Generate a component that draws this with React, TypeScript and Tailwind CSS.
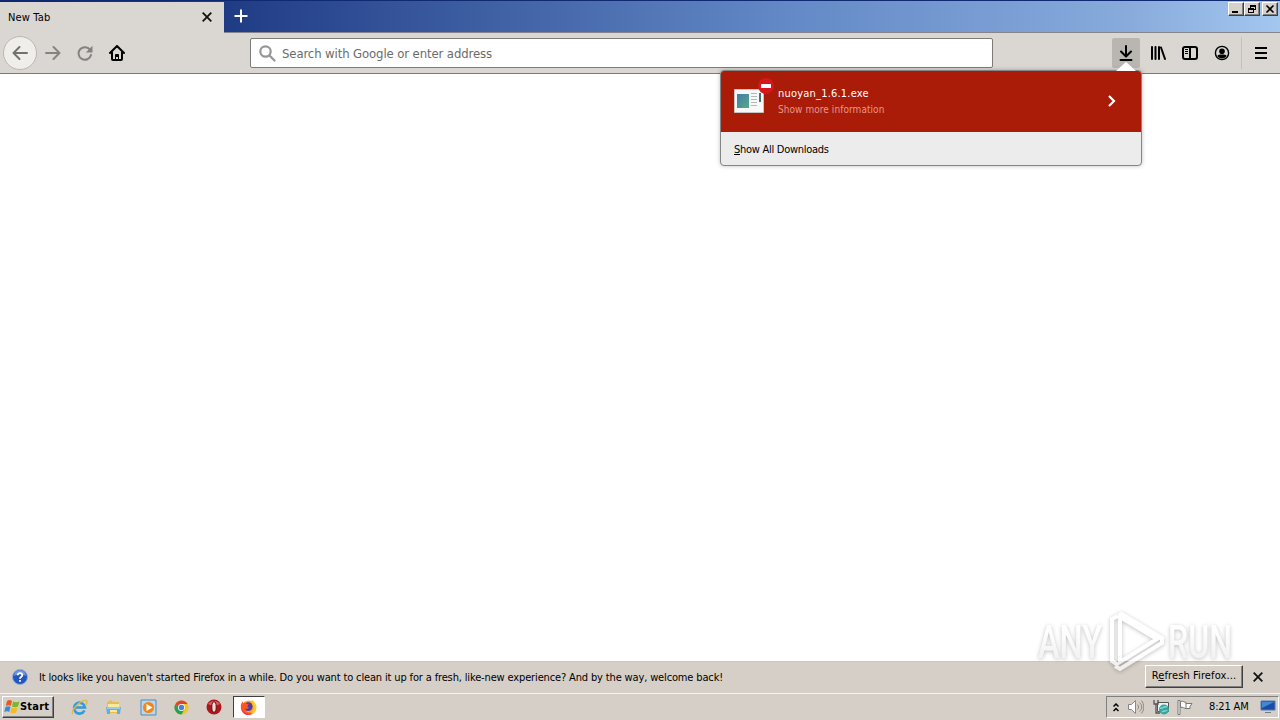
import type { ReactNode } from "react";

type IconProps = { className?: string };

const raised =
  "border border-t-white border-l-white border-r-[#404040] border-b-[#404040] shadow-[inset_-1px_-1px_0_#808080]";

function CloseIcon({ className }: IconProps) {
  return (
    <svg className={className} viewBox="0 0 10 10" fill="none" stroke="#111" strokeWidth="1.8">
      <path d="M.7.7l8.6 8.6M9.3.7L.7 9.3" />
    </svg>
  );
}

function WindowButton({ children, className = "" }: { children: ReactNode; className?: string }) {
  return (
    <button className={`flex h-[14px] w-4 items-center justify-center bg-[#d6d2ca] ${raised} ${className}`}>
      <svg className="h-[10px] w-3 shrink-0" viewBox="0 0 12 10" fill="none" stroke="#000" shapeRendering="crispEdges">
        {children}
      </svg>
    </button>
  );
}

function TitleBar() {
  return (
    <div className="flex h-8 border-t border-[#0f2a70] bg-[linear-gradient(to_right,#0c256d_0px,#203c85_230px,#6288c6_780px,#88abdc_1130px,#a3c7ef_1280px)]">
      <div className="z-10 mt-px flex h-[31px] w-[224px] items-center bg-[#dad6d1] pr-3 pb-px pl-2">
        <span className="pt-[2px] text-[11px] tracking-[0.15px]">New Tab</span>
        <CloseIcon className="ml-auto h-[10px] w-[10px]" />
      </div>
      <svg className="mt-2 ml-[10px] h-[14px] w-[14px]" viewBox="0 0 14 14" stroke="#fff" strokeWidth="2">
        <path d="M7 .5v13M.5 7h13" />
      </svg>
      <div className="mt-px mr-[2px] ml-auto flex">
        <WindowButton>
          <path d="M2 8h6" strokeWidth="2" />
        </WindowButton>
        <WindowButton>
          <path d="M4.5 4V1.5h5v4H8M4 2h6M2.5 4.5h5v4h-5zM2 5h6" />
        </WindowButton>
        <WindowButton className="ml-[2px]">
          <path d="M2.5 1.500l7 7M9.500 1.500l-7 7" strokeWidth="1.600" shapeRendering="auto" />
        </WindowButton>
      </div>
    </div>
  );
}

function NavBar() {
  return (
    <div className="flex h-[42px] items-center border-t border-b border-t-[#85858a] border-b-[#7b7a78] bg-[#dad6d1] pl-[3px]">
      <button className="flex h-[34px] w-[34px] items-center justify-center rounded-full border border-[#bbb8b3] bg-[#f0eeeb]">
        <svg className="h-4 w-4" viewBox="0 0 16 16" fill="none" stroke="#73716e" strokeWidth="2" strokeLinecap="round" strokeLinejoin="round">
          <path d="M15 8H1.5M7.5 2l-6 6 6 6" />
        </svg>
      </button>
      <svg className="ml-2 h-4 w-4" viewBox="0 0 16 16" fill="none" stroke="#858380" strokeWidth="2" strokeLinecap="round" strokeLinejoin="round">
        <path d="M1 8h13.5M8.5 2l6 6-6 6" />
      </svg>
      <svg className="ml-4 h-4 w-4" viewBox="0 0 16 16" fill="none" stroke="#858380" strokeWidth="2">
        <path d="M13.3 5.2A6.3 6.3 0 1 0 14 10" strokeLinecap="round" />
        <path d="M15.5.8v6.7H8.8z" fill="#858380" stroke="none" />
      </svg>
      <svg className="ml-4 h-4 w-4" viewBox="0 0 16 16" fill="none" stroke="#000" strokeWidth="2" strokeLinecap="round" strokeLinejoin="round">
        <path d="M1 8l7-7 7 7M3 7.5V14a1 1 0 0 0 1 1h8a1 1 0 0 0 1-1V7.5" />
        <path d="M6 14v-4a1 1 0 0 1 1-1h2a1 1 0 0 1 1 1v4H9v-2H7v2z" fill="#000" stroke="none" />
      </svg>
      <div className="ml-[125px] flex h-[30px] w-[743px] items-center rounded-[2px] border border-[#7d7b79] bg-white pl-2">
        <svg className="h-[17px] w-[17px]" viewBox="0 0 17 17" fill="none" stroke="#969696" strokeWidth="2.2" strokeLinecap="round">
          <circle cx="6.5" cy="6.5" r="5.2" />
          <path d="M10.5 10.5l5 5" />
        </svg>
        <span className="ml-[6px] pt-px text-[13px] tracking-[-0.11px] text-[#6b6b6b]">Search with Google or enter address</span>
      </div>
      <div className="ml-[119px] flex h-[30px] w-7 items-center justify-center rounded-[2px] bg-[#b9b6b2]">
        <svg className="h-4 w-4" viewBox="0 0 16 16" fill="none" stroke="#000" strokeWidth="2" strokeLinecap="round" strokeLinejoin="round">
          <path d="M8 1v10M3 6.5l5 5 5-5M2.5 15h11" />
        </svg>
      </div>
      <svg className="ml-[10px] h-4 w-4" viewBox="0 0 16 16" fill="none" stroke="#000" strokeWidth="2" strokeLinecap="round">
        <path d="M2 2v12M5.5 2v12M9 2v12M11 2.5L15 14" />
      </svg>
      <svg className="ml-4 h-4 w-4" viewBox="0 0 16 16" fill="none" stroke="#000" strokeWidth="2">
        <rect x="1" y="2" width="14" height="12" rx="2" />
        <path d="M8 2v12" />
        <path d="M3 4.5h3M3 6.5h3M3 8.5h3" strokeWidth="1" />
      </svg>
      <svg className="ml-4 h-4 w-4" viewBox="0 0 16 16">
        <circle cx="8" cy="8" r="6.6" fill="none" stroke="#000" strokeWidth="1.4" />
        <circle cx="8" cy="6.3" r="2.8" />
        <path d="M3.4 10.7C4.6 9.5 6 9.6 8 9.6s3.4-.1 4.6 1.1C11.7 12.5 10 13.4 8 13.4s-3.7-.9-4.6-2.7z" />
      </svg>
      <div className="ml-[11px] h-8 w-px bg-[#c3c0bb]" />
      <svg className="ml-[13px] h-3 w-3" viewBox="0 0 12 12" stroke="#000" strokeWidth="2">
        <path d="M0 1h12M0 6h12M0 11h12" />
      </svg>
    </div>
  );
}

function DownloadsPanel() {
  return (
    <div className="absolute top-[62px] left-[720px] w-[422px]">
      <svg className="ml-[396px] h-[9px] w-[20px]" viewBox="0 0 20 9">
        <path d="M0 9l10-9 10 9z" fill="#fff" />
      </svg>
      <div className="-mt-px overflow-hidden rounded-[4px] border border-[#858585] bg-[#ececec] shadow-[0_0_4px_rgba(0,0,0,0.25)]">
        <div className="flex h-[61px] items-center bg-[#aa1b08] pb-[2px] pl-[13px]">
          <div className="relative">
            <svg className="h-[26px] w-[30px]" viewBox="0 0 30 26">
              <defs>
                <linearGradient id="picture" x1="0" y1="0" x2="1" y2="1">
                  <stop offset="0" stopColor="#4779ad" />
                  <stop offset="1" stopColor="#52ac82" />
                </linearGradient>
              </defs>
              <path d="M.5 1.5h29v23H.5z" fill="#f8f8f8" stroke="#c8c4c0" />
              <path d="M3 6h12v14H3z" fill="url(#picture)" />
              <path d="M17 5.5h6M17 8.5h6M17 11.5h6M17 14.5h6M17 17.5h6" stroke="#b5b9be" />
              <path d="M25 5h2v9h-2z" fill="#397a75" />
            </svg>
            <svg className="absolute -top-[10px] left-[24px] h-4 w-4" viewBox="0 0 16 16">
              <circle cx="8" cy="8" r="8" fill="#d7171f" />
              <rect x="3" y="6" width="10" height="4" rx=".5" fill="#fff" />
            </svg>
          </div>
          <div className="ml-[14px] flex flex-col pt-[2px]">
            <span className="text-[11px] leading-4 tracking-[0.2px] text-white">nuoyan_1.6.1.exe</span>
            <span className="text-[10px] leading-4 tracking-[0.06px] text-[#e5998c]">Show more information</span>
          </div>
          <svg className="mr-[25px] ml-auto h-3 w-2" viewBox="0 0 8 12" fill="none" stroke="#fff" strokeWidth="2.2">
            <path d="M1 1l5 5-5 5" />
          </svg>
        </div>
        <div className="flex h-[33px] items-center pt-[3px] pl-[13px] text-[11px] tracking-[-0.27px]">
          <span>
            <u>S</u>how All Downloads
          </span>
        </div>
      </div>
    </div>
  );
}

function Watermark() {
  return (
    <div className="absolute top-[608px] left-[1036px] flex h-[64px] w-[200px] items-center opacity-70">
      <svg className="h-full w-full overflow-visible drop-shadow-[0_1px_2px_rgba(0,0,0,0.35)]" viewBox="0 0 200 64" fill="none" stroke="#fff" strokeWidth="4">
        <defs>
          <linearGradient id="lettering" x1="0" y1="0" x2="0" y2="1">
            <stop offset="0.3" stopColor="#fff" />
            <stop offset="1" stopColor="#e6e6e6" />
          </linearGradient>
        </defs>
        <g fontFamily="Roboto, sans-serif" fontSize="47" fontWeight="500" fill="url(#lettering)" stroke="none">
          <text x="2" y="50" textLength="64" lengthAdjust="spacingAndGlyphs">
            ANY
          </text>
          <text x="132" y="50" textLength="64" lengthAdjust="spacingAndGlyphs">
            RUN
          </text>
        </g>
        <path d="M82 8l-6 3v42l6 4M84 5v49l37-23-37-22M84 5l42 25v5L84 61l-5-3" />
      </svg>
    </div>
  );
}

function NotificationBar() {
  return (
    <div className="flex h-8 items-center border-t border-[#cbc7c1] bg-[#d6cfc7] pb-[2px] pl-3">
      <svg className="h-4 w-4" viewBox="0 0 16 16">
        <circle cx="8" cy="8" r="7.5" fill="#2456c0" stroke="#91a9d5" />
        <path d="M2 7a6 6 0 0 1 12 0c-3-2-9-2-12 0z" fill="#7198df" />
        <path d="M5.7 6.2C5.7 3.3 10.3 3.5 10.3 6.2 10.300 7.800 8 7.800 8 9.700M8 11v1.800" fill="none" stroke="#fff" strokeWidth="1.800" />
      </svg>
      <span className="ml-[11px] pt-[3px] text-[11px] tracking-[-0.145px] whitespace-nowrap">
        It looks like you haven't started Firefox in a while. Do you want to clean it up for a fresh, like-new experience? And by the way, welcome back!
      </span>
      <button className={`mr-[10px] ml-auto h-[23px] w-[98px] bg-[#d6cfc7] text-[11px] tracking-[0.1px] ${raised}`}>
        R<u>e</u>fresh Firefox...
      </button>
      <CloseIcon className="mr-[17px] h-[10px] w-[10px]" />
    </div>
  );
}

function StartFlag() {
  return (
    <svg className="h-4 w-4" viewBox="0 0 16 16">
      <path d="M3 2c2-1.5 3.5-1 5 0L6.8 7c-1.6-1-3-1-5 0z" fill="#e85b20" />
      <path d="M9 2.5c2 1 4 1 6.5 0L14 7.5c-2 1-4 1-6 0z" fill="#78b82c" />
      <path d="M1.5 8c2-1 3.5-1 5 0l-1.3 5c-1.5-1-3-1-5 0z" fill="#368bd4" />
      <path d="M7.6 8.5c2 1 4 1 6 0l-1.4 5c-2 1-4 1-6 0z" fill="#f5b922" />
    </svg>
  );
}

function InternetExplorerIcon() {
  return (
    <svg className="h-[17px] w-[17px]" viewBox="0 0 17 17" fill="none">
      <path d="M13.5 11.5A5.5 5.5 0 1 1 14 8.5H4" stroke="#2d9ce0" strokeWidth="2.6" />
      <path d="M2 15C-1 12 9 1 15 1.5c2 .5 1 3-.5 5" stroke="#e4b944" strokeWidth="1.4" />
    </svg>
  );
}

function FolderIcon() {
  return (
    <svg className="h-[17px] w-[17px]" viewBox="0 0 17 17">
      <path d="M2 3l4-2 2 2h6v11H2z" fill="#e6bd55" />
      <path d="M3 5h11v8H3z" fill="#fae7a0" />
      <path d="M1 8h15l-1 7h-3v-4H5v4H2z" fill="#65aedb" />
      <path d="M2 9h13" stroke="#cbe9f8" />
    </svg>
  );
}

function MediaPlayerIcon() {
  return (
    <svg className="h-[17px] w-[17px]" viewBox="0 0 17 17">
      <path d="M1 1h15v15H1z" fill="#b8d6ee" stroke="#5489bd" />
      <circle cx="8.5" cy="8.5" r="5.5" fill="#ef8616" />
      <path d="M6.5 5v7l6-3.5z" fill="#fff" />
    </svg>
  );
}

function ChromeIcon() {
  return (
    <svg className="h-[15px] w-[15px]" viewBox="0 0 16 16">
      <circle cx="8" cy="8" r="7.5" fill="#f4c51c" />
      <path d="M1.5 4.25A7.5 7.5 0 0 1 14.5 4.25H8L4.75 9.9z" fill="#dc4437" />
      <path d="M1.5 4.25A7.5 7.5 0 0 0 8 15.5l3.25-5.6H4.75z" fill="#23a15b" />
      <circle cx="8" cy="8" r="3.7" fill="#fff" />
      <circle cx="8" cy="8" r="2.9" fill="#4285df" />
    </svg>
  );
}

function OperaIcon() {
  return (
    <svg className="h-4 w-4" viewBox="0 0 16 16">
      <circle cx="8" cy="8" r="7.5" fill="#ad171c" />
      <path d="M2 5c3-4 9-4 12 0-4 2-8 2-12 0z" fill="#d66060" />
      <ellipse cx="8" cy="8" rx="2.2" ry="5.3" fill="#e8dfda" stroke="#710b10" />
    </svg>
  );
}

function FirefoxIcon() {
  return (
    <svg className="h-[17px] w-[17px]" viewBox="0 0 17 17">
      <circle cx="8.5" cy="8" r="6.5" fill="#ffa51e" />
      <circle cx="8.3" cy="7.6" r="4.3" fill="#4b3cae" />
      <path d="M2.5 2.5C.5 5 .3 9 1.800 12c3 6 12 5 14-1-2 2-4 3-7 2.500C6 13 5 11 5.500 9.500c1.500 1 2.800 0 3.500-1C7 8 7 6.500 9 5.500 7 5 6 4.500 5.500 3.500c-1 0-2 .5-2 1z" fill="#ff5525" />
      <path d="M11.500.8c5 2.700 6.500 8 3.500 12-2 2.700-5 2.700-7 1.700 4 0 6.500-3 5.500-7-.5-2-2-3-2-6.700z" fill="#ffcb2b" />
      <path d="M1.500 10c2 5 7 5.500 11 3.500-3 4-10 3-11-3.500z" fill="#f32d4b" />
    </svg>
  );
}

function SystemTray() {
  return (
    <div className="ml-auto flex h-[22px] w-[173px] items-center border border-t-[#808080] border-r-white border-b-white border-l-[#808080] pl-[6px]">
      <svg className="h-[9px] w-[6px]" viewBox="0 0 6 9" fill="none" stroke="#000" strokeWidth="1.5">
        <path d="M.5 3.500L3 1 5.500 3.500M.5 8L3 5.500 5.500 8" />
      </svg>
      <svg className="ml-[9px] h-4 w-4" viewBox="0 0 16 16" fill="none" stroke="#888">
        <path d="M.5 5.5h3l4-4v13l-4-4h-3z" fill="#fff" />
        <path d="M9.5 5.5c1.5 1.5 1.5 3.5 0 5M11.5 3.5c3 3 3 6 0 9M13.500 1.500c3 4 3 9 0 13" />
      </svg>
      <svg className="ml-[9px] h-4 w-4" viewBox="0 0 16 16" fill="none">
        <path d="M4.5 3.5h11v9h-11z" fill="#eef1f2" stroke="#555" />
        <path d="M1 1v4h4V1M3 5v9h4" stroke="#555" strokeWidth="1.3" />
        <circle cx="11" cy="10.5" r="5" fill="#35a798" />
        <path d="M7 9c3 1 3-2 7-1M9 13c2-2 4 0 5-2" stroke="#83d4d9" strokeWidth="1.5" />
      </svg>
      <svg className="ml-[8px] h-4 w-4" viewBox="0 0 16 16" fill="#fff" stroke="#777">
        <path d="M1 1.5h2v14H1zM3.5 2.5c3-1 4 1 5.5 1v6c-2 0-3-2-5.5-1zM9 4.5h6l-2 3v2H9" />
      </svg>
      <span className="ml-[16px] pt-px text-[11px] tracking-[-0.15px] whitespace-nowrap">8:21 AM</span>
      <svg className="mr-[2px] ml-auto h-[14px] w-4 shrink-0" viewBox="0 0 16 14">
        <path d="M1 1h14v9H1z" fill="#194da5" stroke="#5479b6" />
        <path d="M2 2h12L2 8z" fill="#4687d2" />
        <path d="M5 12h6v1H5z" fill="#6f7c8b" />
      </svg>
    </div>
  );
}

function Taskbar() {
  return (
    <div className="flex h-[27px] items-center border-t border-[#f7f5f2] bg-[#d6cfc7] pr-px pl-[2px]">
      <button className={`flex h-[22px] w-[52px] items-center bg-[#d6cfc7] pl-px text-[11px] font-bold tracking-[0.2px] ${raised}`}>
        <StartFlag />
        <span className="pt-px">Start</span>
      </button>
      <div className="ml-[17px] flex w-[151px] items-center justify-between">
        <InternetExplorerIcon />
        <FolderIcon />
        <MediaPlayerIcon />
        <ChromeIcon />
        <OperaIcon />
      </div>
      <div className="ml-[11px] flex h-[22px] w-8 items-center justify-center border border-t-[#404040] border-r-white border-b-white border-l-[#404040] bg-white pr-px">
        <FirefoxIcon />
      </div>
      <SystemTray />
    </div>
  );
}

export default function App() {
  return (
    <div className="relative flex h-[720px] w-[1280px] flex-col overflow-hidden bg-white font-['DejaVu_Sans_Condensed','DejaVu_Sans',sans-serif] text-black">
      <TitleBar />
      <NavBar />
      <main className="flex-1" />
      <NotificationBar />
      <Taskbar />
      <Watermark />
      <DownloadsPanel />
    </div>
  );
}
